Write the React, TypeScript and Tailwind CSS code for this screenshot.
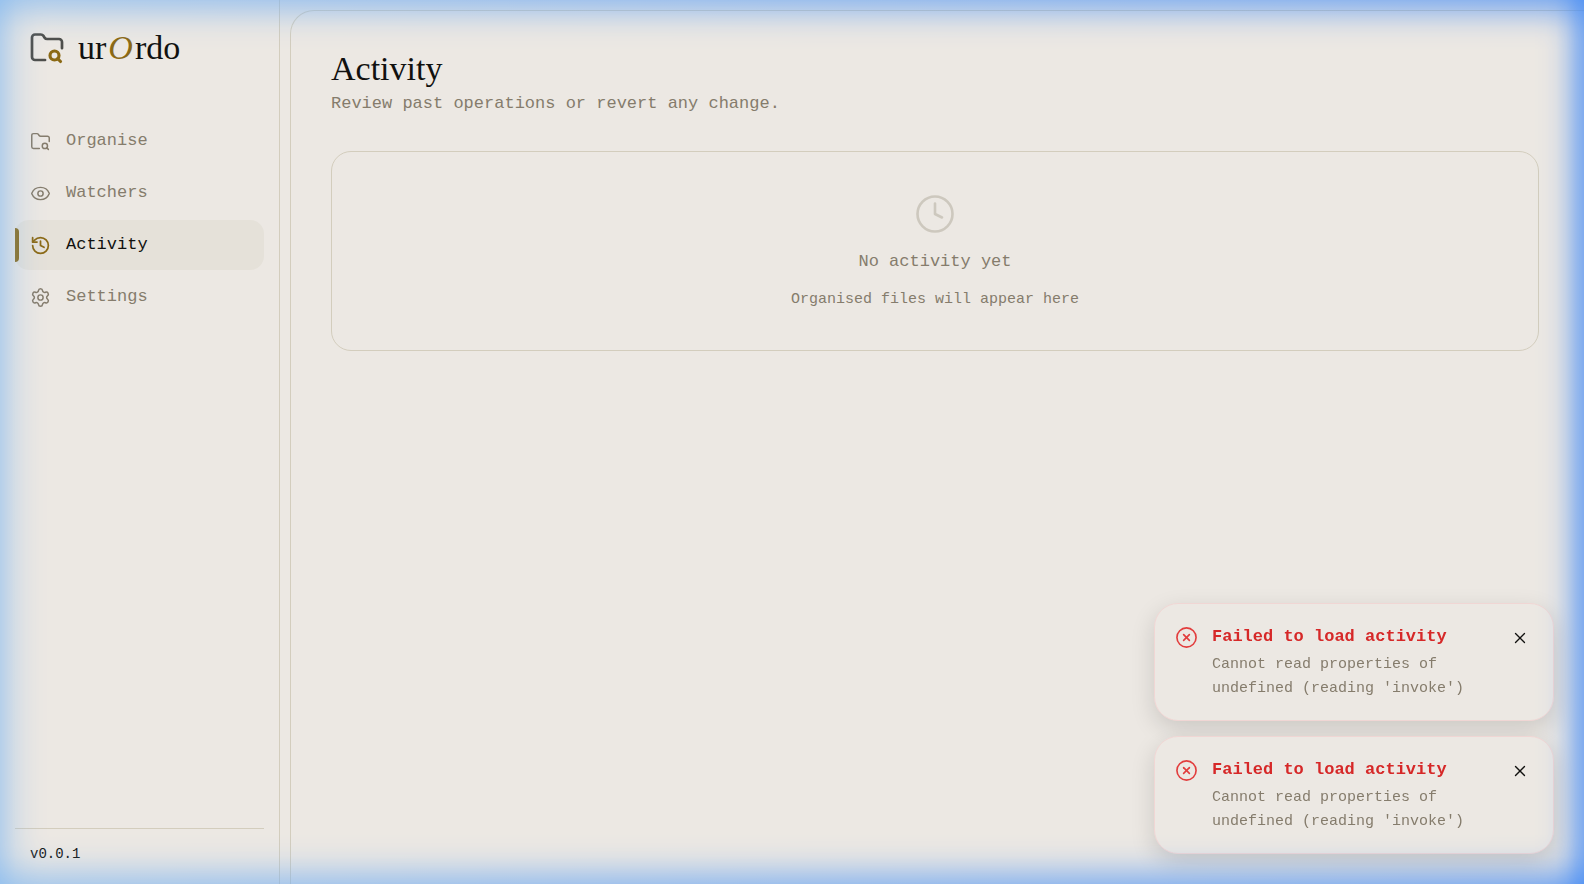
import { Clock, Eye, History, Settings, CircleX, X } from "lucide-react";
import type { ReactNode } from "react";

function FolderSearch({ size, width, lensWidth, lens }: { size: number; width: number; lensWidth: number; lens: string }) {
  return (
    <svg width={size} height={size} viewBox="0 0 24 24" fill="none" stroke="currentColor" strokeWidth={width} strokeLinecap="round" strokeLinejoin="round" aria-hidden="true">
      <path d="M10.7 20H4a2 2 0 0 1-2-2V5a2 2 0 0 1 2-2h3.9a2 2 0 0 1 1.69.9l.81 1.2a2 2 0 0 0 1.67.9H20a2 2 0 0 1 2 2v4.1" />
      <g className={lens} strokeWidth={lensWidth}>
        <circle cx="17" cy="17" r="3" />
        <path d="m21 21-1.9-1.9" />
      </g>
    </svg>
  );
}

function NavItem({ icon, label, active = false }: { icon: ReactNode; label: string; active?: boolean }) {
  return (
    <a
      href="#"
      aria-current={active ? "page" : undefined}
      className={
        active
          ? "relative flex h-[50px] items-center gap-[15px] rounded-[14px] bg-[#e5e1d9] pl-[15px] text-[#11110f]"
          : "flex h-[50px] items-center gap-[15px] pl-[15px] text-[#857c6c]"
      }
    >
      {active && <span className="absolute top-2 bottom-2 left-0 w-1 rounded-r-sm bg-[#8b6914]" />}
      <span className={active ? "text-[#8b6914]" : ""}>{icon}</span>
      <span>{label}</span>
    </a>
  );
}

function Toast() {
  return (
    <div role="alert" className="flex items-start gap-[14px] rounded-3xl border border-[#f0d6d4] bg-[#ece8e3] px-5 pt-[21px] pb-[19px] shadow-[0_8px_24px_rgba(0,0,0,0.14)]">
      <CircleX size={23} strokeWidth={1.7} className="mt-px shrink-0 text-[#e23d3d]" />
      <div className="min-w-0 flex-1">
        <h2 className="text-[17px] leading-6 font-bold text-[#d62828]">Failed to load activity</h2>
        <p className="mt-1 text-[15px] leading-6 text-[#857c6c]">Cannot read properties of undefined (reading 'invoke')</p>
      </div>
      <button type="button" aria-label="Dismiss" className="mt-1 mr-1 text-[#11110f]">
        <X size={18} strokeWidth={1.8} />
      </button>
    </div>
  );
}

export default function App() {
  return (
    <div className="relative flex min-h-screen bg-[#ece8e3] font-['Liberation_Mono',monospace] text-[17px] leading-7 text-[#11110f]">
      <aside className="flex w-[280px] shrink-0 flex-col border-r border-[#d3cdbd] px-[15px]">
        <div className="flex items-center gap-[13px] px-[14px] pt-6 text-[#4d4d49]">
          <FolderSearch size={36} width={1.8} lensWidth={2.1} lens="text-[#8b6914]" />
          <span className="font-['Liberation_Serif',serif] text-[34px] leading-12 text-[#11110f]">
            ur<em className="mx-0.5 text-[#8b6914]">O</em>rdo
          </span>
        </div>
        <nav className="mt-11 flex flex-col gap-0.5">
          <NavItem icon={<FolderSearch size={21} width={1.7} lensWidth={1.7} lens="" />} label="Organise" />
          <NavItem icon={<Eye size={21} strokeWidth={1.7} />} label="Watchers" />
          <NavItem icon={<History size={21} strokeWidth={2} />} label="Activity" active />
          <NavItem icon={<Settings size={21} strokeWidth={1.7} />} label="Settings" />
        </nav>
        <div className="mt-auto border-t border-[#d3cdbd] px-[15px] pt-[11px] pb-4 text-[14px]">v0.0.1</div>
      </aside>

      <main className="mt-2.5 ml-2.5 flex-1 rounded-tl-3xl border-t border-l border-[#d3cdbd] py-10 pr-[45px] pl-10">
        <h1 className="font-['Liberation_Serif',serif] text-[34px] leading-9">Activity</h1>
        <p className="mt-[3px] text-[#857c6c]">Review past operations or revert any change.</p>
        <section className="mt-[33px] flex flex-col items-center rounded-[20px] border border-[#d3cdbd] pt-[41px] pb-[38px] text-[#857c6c]">
          <Clock size={42} strokeWidth={1.5} className="text-[#cdc8be]" />
          <p className="mt-[13px]">No activity yet</p>
          <p className="mt-3 text-[15px] leading-6">Organised files will appear here</p>
        </section>
      </main>

      <div className="fixed right-[30px] bottom-[30px] flex w-[400px] flex-col gap-[15px]">
        <Toast />
        <Toast />
      </div>

      {/* Blue glow that fades in from the four window edges */}
      <div
        aria-hidden="true"
        className="pointer-events-none fixed inset-0 bg-linear-to-r from-[#82b8f0] to-[#3b86f6] [mask-image:linear-gradient(to_right,#00000084,#0000005c_8px,#00000034_16px,#00000018_26px,#00000006_38px,transparent_50px),linear-gradient(to_left,#0000009c,#00000078_8px,#0000003c_18px,#00000014_28px,#00000005_38px,transparent_50px),linear-gradient(to_bottom,#0000008c,#0000006a_8px,#0000003c_18px,#00000018_28px,#00000006_38px,transparent_50px),linear-gradient(to_top,#0000008c,#0000006a_8px,#0000003c_18px,#00000018_28px,#00000006_38px,transparent_50px)]"
      />
    </div>
  );
}
